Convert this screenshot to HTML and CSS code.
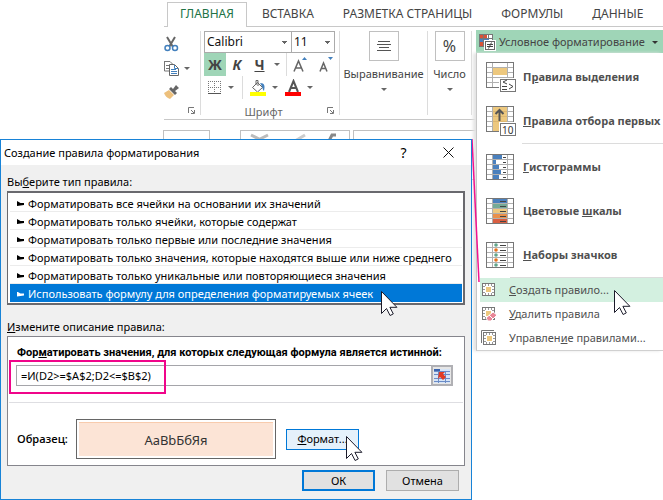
FILE: index.html
```html
<!DOCTYPE html>
<html lang="ru">
<head>
<meta charset="utf-8">
<title>Создание правила форматирования</title>
<link rel="stylesheet" href="styles.css">
</head>
<body>
<svg width="0" height="0" class="defs" aria-hidden="true">
  <defs>
    <g id="grid" shape-rendering="crispEdges">
      <rect x="0.5" y="0.5" width="27" height="25" fill="#fff"/>
      <path d="M0 5.5h28M0 10.5h28M0 15.5h28M0 20.5h28M6.5 0v26M21.5 0v26" stroke="#b0b0b0"/>
      <rect x="0.5" y="0.5" width="27" height="25" fill="none" stroke="#777"/>
    </g>
    <g id="small-sheet" shape-rendering="crispEdges">
      <rect x="0.5" y="0.5" width="12" height="12" fill="#fff" stroke="#777"/>
      <path d="M3.5 1v2M6.5 1v2M9.5 1v2M3.5 10v2M6.5 10v2M9.5 10v2M1 3.5h2M1 6.5h2M1 9.5h2M10 3.5h2M10 6.5h2M10 9.5h2" stroke="#999"/>
      <rect x="4" y="4" width="5" height="5" fill="#edc87e"/>
    </g>
    <path id="pointer" d="M.5.5v22l5-5 3.600 7 3.200-1.600-3.400-6.600h7z" fill="#fff" stroke="#1b1b2a"/>
    <path id="launcher" d="M.5 6V.5H6M3 3l3 3M6.500 3v3.500H3" fill="none" stroke="#777"/>
  </defs>
</svg>

<main class="workbook">
  <nav class="tabs">
    <a class="tab active" href="#">ГЛАВНАЯ</a>
    <a class="tab" href="#">ВСТАВКА</a>
    <a class="tab" href="#">РАЗМЕТКА СТРАНИЦЫ</a>
    <a class="tab" href="#">ФОРМУЛЫ</a>
    <a class="tab" href="#">ДАННЫЕ</a>
  </nav>
  <div class="ribbon">
    <section class="group clipboard">
      <button class="tool" aria-label="Вырезать"><svg width="15" height="16" viewBox="0 0 15 16"><path d="M3 1l6 10M11 1L5 11" stroke="#666" stroke-width="2" fill="none"/><circle cx="3.500" cy="12" r="2.500" fill="#fff" stroke="#4380bd" stroke-width="1.500"/><circle cx="11" cy="12" r="2.500" fill="#fff" stroke="#4380bd" stroke-width="1.500"/></svg></button>
      <button class="tool" aria-label="Копировать"><svg width="15" height="15" viewBox="0 0 15 15"><path d="M0 .5h6l3 3M.5 1v9H5M2 4.500h3M2 7.500h3" fill="none" stroke="#777"/><path d="M5.500 3.500h5l4 4v7h-9z" fill="#fff" stroke="#666"/><path d="M10.500 4v3.500H14M7 8.500h5M7 10.500h6M7 12.500h6" fill="none" stroke="#4380bd"/></svg><i class="arrow"></i></button>
      <button class="tool" aria-label="Формат по образцу"><svg width="15" height="14" viewBox="0 0 15 14"><path d="M0 8l5-3 5 5-4 4c-3-1-5-3-6-6z" fill="#edc07c"/><path d="M5 4l6 6 2-2-2-2 4-3-3-3-3 4-2-2z" fill="#666"/></svg></button>
      <svg class="launch" width="8" height="8"><use href="#launcher"/></svg>
    </section>
    <section class="group font">
      <div class="combos">
        <select class="combo name" aria-label="Шрифт"><option>Calibri</option></select>
        <select class="combo size" aria-label="Размер"><option>11</option></select>
      </div>
      <div class="row">
        <button class="letter pressed">Ж</button>
        <button class="letter"><em>К</em></button>
        <button class="letter wide"><u>Ч</u><i class="arrow"></i></button>
        <button class="letter size-step" aria-label="Увеличить шрифт"><svg width="15" height="18"><path d="M1 15.500L5.500 5l4.500 10.500M2.500 12h6" fill="none" stroke="#666" stroke-width="1.500"/><path d="M9 4l2.500-3L14 4z" fill="#4380bd"/></svg></button>
        <button class="letter" aria-label="Уменьшить шрифт"><svg width="15" height="18"><path d="M1 15.500L4.500 7 8 15.500M2 12.500h5" fill="none" stroke="#666" stroke-width="1.500"/><path d="M9 1h5l-2.500 3z" fill="#4380bd"/></svg></button>
      </div>
      <div class="row">
        <button class="paint borders" aria-label="Границы"><svg width="14" height="14" shape-rendering="crispEdges"><path d="M0 .5h13M0 6.500h13M.5 0v13M6.500 0v13M12.500 0v13" stroke="#777" stroke-dasharray="1 1"/><path d="M0 12.500h13" stroke="#555"/></svg><i class="arrow"></i></button>
        <button class="paint fill" aria-label="Цвет заливки"><svg width="16" height="17"><path d="M2.500 8.500l5-5 5 5-5 4.500zM6 6V1.500h2V7" fill="#fff" stroke="#666"/><path d="M10 4c5 0 5 3 4 8-2-2-1-4-4-8z" fill="#4380bd"/><path d="M0 13h16v4H0z" fill="#ff0"/></svg><i class="arrow"></i></button>
        <button class="paint color" aria-label="Цвет текста"><svg width="16" height="17"><path d="M4 13L8.500 2 13 13M5.500 9h6" fill="none" stroke="#555" stroke-width="2"/><path d="M0 13h16v4H0z" fill="red"/></svg><i class="arrow"></i></button>
      </div>
      <footer class="caption">Шрифт</footer>
      <svg class="launch" width="8" height="8"><use href="#launcher"/></svg>
    </section>
    <section class="group align">
      <button class="big"><span class="tile"><svg width="14" height="11" shape-rendering="crispEdges"><path d="M1 .5h12M0 3.500h14M2 6.500h10M0 9.500h14" stroke="#555"/></svg></span>Выравнивание<i class="arrow"></i></button>
    </section>
    <section class="group number">
      <button class="big"><span class="tile percent">%</span>Число<i class="arrow"></i></button>
    </section>
    <section class="styles">
      <button class="conditional" aria-expanded="true"><svg width="17" height="17" shape-rendering="crispEdges"><path d="M0 0h14v12H0z" fill="#fff"/><path d="M0 0h8v4H0zM0 8h5v4H0z" fill="#d95336"/><path d="M0 4h10v4H0z" fill="#4a80bd"/><path d="M.5.5h13v12H.5zM9.500 0v4M0 4.500h14M4.500 0v12" fill="none" stroke="#777"/><rect x="5" y="6" width="12" height="11" fill="#fff"/><path d="M6.500 7.500h9v8h-9z" fill="#fff" stroke="#666"/><path d="M8 10.500h6M8 12.500h6" stroke="#444"/><path d="M12.500 8.500l-3 6" stroke="#444" shape-rendering="auto"/></svg>Условное форматирование<i class="arrow dark"></i></button>
    </section>
  </div>
  <div class="formula-bar">
    <span class="cell-name"></span>
    <span class="fx"><svg width="108" height="10"><path d="M10 4l12 6M27 4l-12 6" stroke="#bbb" stroke-width="3"/><path d="M54 10l10-6" stroke="#ccc" stroke-width="3"/><path d="M88 10l3-6h4" stroke="#888" stroke-width="3" fill="none"/></svg></span>
    <span class="formula"></span>
  </div>
</main>

<div class="menu" role="menu">
  <button class="item" role="menuitem"><svg width="30" height="30" viewBox="0 0 30 30"><use href="#grid"/><path d="M7 6h14v7H7z" fill="#edc87e"/><g shape-rendering="crispEdges"><path d="M13 16h17v14H13z" fill="#fff"/><path d="M14.500 17.500h15v12h-15z" fill="#fff" stroke="#777"/></g><path d="M21 18l-4 2 4 2M16 24.500h5M16 27.500h5M23 22l4 2.500-4 2.500" fill="none" stroke="#444"/></svg><span>П<u>р</u>авила выделения</span></button>
  <button class="item" role="menuitem"><svg width="30" height="30" viewBox="0 0 30 30"><use href="#grid"/><path d="M7 1h14v24H7z" fill="#edc87e"/><path d="M7 5.500h14M7 10.500h14M7 15.500h14" stroke="#dcb670"/><path d="M13.500 15V4M9.500 8l4-4 4 4" fill="none" stroke="#555" stroke-width="2"/><g shape-rendering="crispEdges"><path d="M13 16h17v14H13z" fill="#fff"/><path d="M14.500 17.500h15v12h-15z" fill="#fff" stroke="#777"/></g><text x="16" y="28" class="ten">10</text></svg><span><u>П</u>равила отбора первых</span></button>
  <hr class="rule inset">
  <button class="item" role="menuitem"><svg width="30" height="26" viewBox="0 0 30 26" shape-rendering="crispEdges"><use href="#grid"/><path d="M7 1h9v4H7zM7 6h3v4H7zM7 11h6v4H7zM7 16h8v4H7zM7 21h6v4H7z" fill="#4a80bd"/><path d="M17 3.500h3M17 8.500h3M17 13.500h3M17 18.500h3M17 23.500h3" stroke="#444"/></svg><span><u>Г</u>истограммы</span></button>
  <button class="item" role="menuitem"><svg width="30" height="26" viewBox="0 0 30 26" shape-rendering="crispEdges"><use href="#grid"/><path d="M7 1h14v4H7z" fill="#4a80bd"/><path d="M7 6h14v4H7z" fill="#75aa96"/><path d="M7 11h14v4H7z" fill="#edc87e"/><path d="M7 16h14v4H7z" fill="#e9904b"/><path d="M7 21h14v4H7z" fill="#d95f42"/><path d="M14 3.500h6M14 8.500h6M14 13.500h6M14 18.500h6M14 23.500h6" stroke="#444"/></svg><span>Цветовые <u>ш</u>калы</span></button>
  <button class="item" role="menuitem"><svg width="30" height="26" viewBox="0 0 30 26"><use href="#grid"/><path d="M14 3.500h6M14 8.500h6M14 13.500h6M14 18.500h6M14 23.500h6" stroke="#444" shape-rendering="crispEdges"/><g fill="#63a58b"><circle cx="10" cy="3" r="1.800"/><circle cx="10" cy="13" r="1.800"/><circle cx="10" cy="23" r="1.800"/></g><g fill="#e8731c"><circle cx="10" cy="8" r="1.800"/><circle cx="10" cy="18" r="1.800"/></g></svg><span><u>Н</u>аборы значков</span></button>
  <hr class="rule">
  <button class="item short hover" role="menuitem"><svg width="16" height="16"><use href="#small-sheet" x="1" y="1"/></svg><span><u>С</u>оздать правило...</span></button>
  <button class="item short" role="menuitem"><svg width="16" height="16"><use href="#small-sheet" x="1" y="1"/><path d="M5 12l7-6 4 3-6 6H7z" fill="#e88797" stroke="#fff"/><path d="M8 9l4 4" stroke="#fff"/></svg><span><u>У</u>далить правила</span></button>
  <button class="item short" role="menuitem"><svg width="16" height="16"><path d="M.5 13V.5H13" fill="none" stroke="#777"/><use href="#small-sheet" x="2" y="2"/></svg><span>Управлен<u>и</u>е правилами...</span></button>
  <svg class="cursor on-menu" width="18" height="27" viewBox="0 0 18 27"><use href="#pointer"/></svg>
</div>

<svg class="callout-line" width="10" height="144" viewBox="0 0 10 144"><path d="M1 0l7 143" stroke="#f0148f" stroke-width="1.500"/></svg>

<div class="dialog" role="dialog" aria-labelledby="dialog-title">
  <header class="titlebar">
    <h1 id="dialog-title">Создание правила форматирования</h1>
    <button class="window-button help" aria-label="Справка">?</button>
    <button class="window-button" aria-label="Закрыть"><svg width="11" height="11"><path d="M.5.5l10 10M10.500.5l-10 10" stroke="#111"/></svg></button>
  </header>
  <div class="content">
    <h2 id="type-label">Вы<u>б</u>ерите тип правила:</h2>
    <ul class="types" role="listbox" aria-labelledby="type-label">
      <li role="option"><i class="mark"></i>Форматировать все ячейки на основании их значений</li>
      <li role="option"><i class="mark"></i>Форматировать только ячейки, которые содержат</li>
      <li role="option"><i class="mark"></i>Форматировать только первые или последние значения</li>
      <li role="option"><i class="mark"></i>Форматировать только значения, которые находятся выше или ниже среднего</li>
      <li role="option"><i class="mark"></i>Форматировать только уникальные или повторяющиеся значения</li>
      <li role="option" aria-selected="true"><i class="mark"></i>Использовать формулу для определения форматируемых ячеек</li>
    </ul>
    <svg class="cursor on-list" width="18" height="27" viewBox="0 0 18 27"><use href="#pointer"/></svg>
    <h2 class="second"><u>И</u>змените описание правила:</h2>
    <section class="description">
      <label for="formula">Фор<u>м</u>атировать значения, для которых следующая формула является истинной:</label>
      <div class="field">
        <input id="formula" type="text" value="=И(D2&gt;=$A$2;D2&lt;=$B$2)">
        <button class="pick" aria-label="Выбрать диапазон"><svg width="16" height="14" shape-rendering="crispEdges"><path d="M0 0h16v14H0z" fill="#d6e4f6"/><path d="M0 0h6v3H0z" fill="#3b64ae"/><path d="M0 2.500h16M0 5.500h16M0 9.500h16M0 12.500h16M4.500 3v11M11.500 3v11" stroke="#6b8cc7"/><path d="M5 3h6l-2 2 3 3-3 3-3-3-2 2z" fill="#e23b22" shape-rendering="auto"/></svg></button>
        <span class="highlight"></span>
      </div>
      <div class="sample">
        <b>Образец:</b>
        <div class="preview"><span>АаВbБбЯя</span></div>
        <button class="push format"><span><u>Ф</u>ормат...</span><svg class="cursor on-format" width="18" height="27" viewBox="0 0 18 27"><use href="#pointer"/></svg></button>
      </div>
    </section>
    <footer class="actions">
      <button class="push primary">ОК</button>
      <button class="push">Отмена</button>
    </footer>
  </div>
</div>
</body>
</html>
```
FILE: styles.css
```css
* { box-sizing: border-box; }

body {
  margin: 0;
  min-height: 100vh;
  position: relative;
  overflow: hidden;
  background: #fff;
  color: #000;
  font: 11px/18px "Noto Sans", "Open Sans", sans-serif;
}

button, input, select { font: inherit; color: inherit; }
button { border: 0; padding: 0; background: none; }
h1, h2, ul { margin: 0; padding: 0; font-size: 11px; font-weight: 400; }
svg { display: block; flex: none; }
.defs { position: absolute; }

/* Ribbon */
.workbook { margin-left: 164px; color: #444; }

.tabs { display: flex; height: 27px; padding: 2px 0 0 3px; white-space: nowrap; box-shadow: inset 0 -1px #c8c8c8; }
.tab { padding: 3px 14px 0 15px; color: #444; text-decoration: none; font-size: 12px; }
.tab.active { padding: 2px 12px 0; border: 1px solid #c8c8c8; border-bottom: 0; background: #fff; color: #217346; }

.ribbon { display: flex; height: 93px; padding-top: 4px; border-bottom: 1px solid #c8c8c8; }
.group { position: relative; flex: none; height: 84px; border-right: 1px solid #dcdcdc; }

.arrow { flex: none; width: 0; height: 0; border: 3px solid transparent; border-top-color: #666; border-bottom: 0; }
.arrow.dark { margin-left: 4px; border-top-color: #333; }
.launch { position: absolute; right: 4px; bottom: 0; }

.clipboard { width: 37px; }
.tool { display: flex; align-items: center; gap: 5px; height: 24px; padding-top: 2px; }

.font { width: 139px; padding-left: 3px; }
.combos { display: flex; }
.combo {
  --ink: linear-gradient(#666, #666);
  appearance: none;
  height: 22px;
  border: 1px solid #ababab;
  border-radius: 0;
  padding: 0 2px;
  background: var(--ink) right 4px top 9px / 5px 1px no-repeat, var(--ink) right 5px top 10px / 3px 1px no-repeat, var(--ink) right 6px top 11px / 1px 1px no-repeat, #fff;
  color: #111;
  font-size: 12px;
}
.combo.name { width: 88px; }
.combo.size { width: 44px; margin-left: -1px; }
.row { display: flex; height: 23px; }
.letter { display: flex; align-items: center; justify-content: center; width: 22px; font-size: 14px; font-weight: 700; }
.letter.wide { width: 38px; gap: 9px; }
.letter.pressed { background: #9fd5b7; }
.letter.size-step { width: 28px; margin-right: 1px; border-left: 1px solid #dcdcdc; }
.paint { display: flex; align-items: center; gap: 6px; width: 34px; }
.paint.borders { width: 39px; padding-left: 4px; border-right: 1px solid #dcdcdc; }
.paint.fill { width: 42px; padding-left: 7px; }
.caption { padding: 4px 16px 0 0; text-align: center; color: #666; }

.big { display: flex; flex-direction: column; align-items: center; width: 100%; }
.tile { display: grid; place-items: center; width: 30px; height: 30px; margin-bottom: 4px; border: 1px solid #c0c0c0; }
.percent { font-size: 16px; }
.big .arrow { margin-top: 5px; }
.align { width: 88px; }
.number { width: 44px; }

.styles { flex: 1; padding-left: 4px; margin-top: -1px; }
.conditional { display: flex; align-items: center; width: 100%; height: 24px; padding-left: 3px; gap: 3px; background: #9fd5b7; white-space: nowrap; }

.formula-bar { display: flex; height: 60px; padding-top: 10px; }
.formula-bar span { border: 1px solid #c0c0c0; }
.cell-name { width: 47px; margin-left: -1px; }
.fx { width: 110px; margin: 0 3px 0 30px; }
.formula { flex: 1; }

/* Drop-down menu */
.menu { position: absolute; top: 53px; left: 476px; right: 0; padding: 2px 0 0 3px; border-left: 1px solid #c6c6c6; border-bottom: 1px solid #d0d0d0; background: #fff; box-shadow: -3px 0 3px #e4e4e4; }
.item { display: flex; align-items: center; width: 100%; height: 44px; padding-left: 6px; gap: 7px; color: #505050; font-weight: 700; white-space: nowrap; }
.item.short { height: 24px; padding-left: 1px; gap: 12px; font-weight: 400; }
.item.hover { background: #d3f0e0; }
.ten { font: 10px "Noto Sans", sans-serif; fill: #333; }
.rule { height: 1px; margin: 0 0 0 30px; border: 0; background: #dcdcdc; }
.rule.inset { margin: 0 0 1px 42px; }
.cursor { position: absolute; }
.on-menu { left: 137px; top: 237px; }
.callout-line { position: absolute; left: 471px; top: 139px; }

/* Dialog window */
.dialog { position: absolute; left: 0; top: 139px; width: 472px; border: 1px solid #1883d7; background: #f0f0f0; }
.titlebar { display: flex; align-items: center; height: 25px; padding-left: 3px; background: #fff; }
.titlebar h1 { flex: 1; }
.window-button { display: grid; place-items: center; width: 45px; height: 25px; }
.help { font-size: 14px; }
.content { padding: 8px 6px; }
.types { padding: 1px 1px 1px 2px; border: 2px solid #69696e; border-left-width: 1px; background: #fff; list-style: none; }
.content h2 { height: 18px; }
.content .second { margin: 13px 0 0; }
.types li { display: flex; align-items: center; height: 18px; padding: 2px 0 0 7px; gap: 4px; border-bottom: 1px solid #ececec; white-space: nowrap; }
.mark { flex: none; width: 7px; height: 5px; background: currentColor; clip-path: polygon(0 0, 50% 40%, 100% 40%, 100% 80%, 0 100%); }
.types li[aria-selected] { background: #0078d7; color: #fff; border-bottom: 0; }
.on-list { left: 380px; top: 151px; }

.description { border: 1px solid #85858c; background: #fff; padding: 7px 1px; height: 130px; }
.description label { display: block; padding-left: 8px; font: 700 11px/18px Roboto, sans-serif; white-space: nowrap; }
.field { position: relative; display: flex; margin: 3px 10px 0 7px; }
.field input { flex: 1; min-width: 0; height: 21px; padding: 0 4px; border: 1px solid #a5a5aa; border-right: 0; }
.pick { display: grid; place-items: center; width: 22px; height: 21px; border: 2px solid #b0b0b4; background: #e6e6e6; }
.highlight { position: absolute; left: -7px; top: -5px; width: 157px; height: 34px; border: 2px solid #f0058a; }
.sample { display: flex; align-items: center; margin-top: 16px; padding: 16px 8px 0; border-top: 1px solid #dedee2; }
.sample b { width: 59px; font: 600 11px/18px "Open Sans", sans-serif; }
.preview { width: 200px; height: 40px; padding: 2px; border: 1px solid #666; }
.preview span { display: grid; place-items: center; height: 34px; border-top: 1px solid #f8cbad; background: #fce4d6; color: #333; font-size: 13px; }
.push { position: relative; width: 73px; height: 21px; border: 1px solid #adadad; background: #e1e1e1; }
.push.format { margin-left: 10px; border-color: #0078d7; background: #e5f1fb; }
.push.primary { border: 2px solid #0078d7; }
.on-format { left: 59px; top: 6px; }
.actions { display: flex; justify-content: flex-end; gap: 11px; padding: 4px 6px 0 0; }
```
